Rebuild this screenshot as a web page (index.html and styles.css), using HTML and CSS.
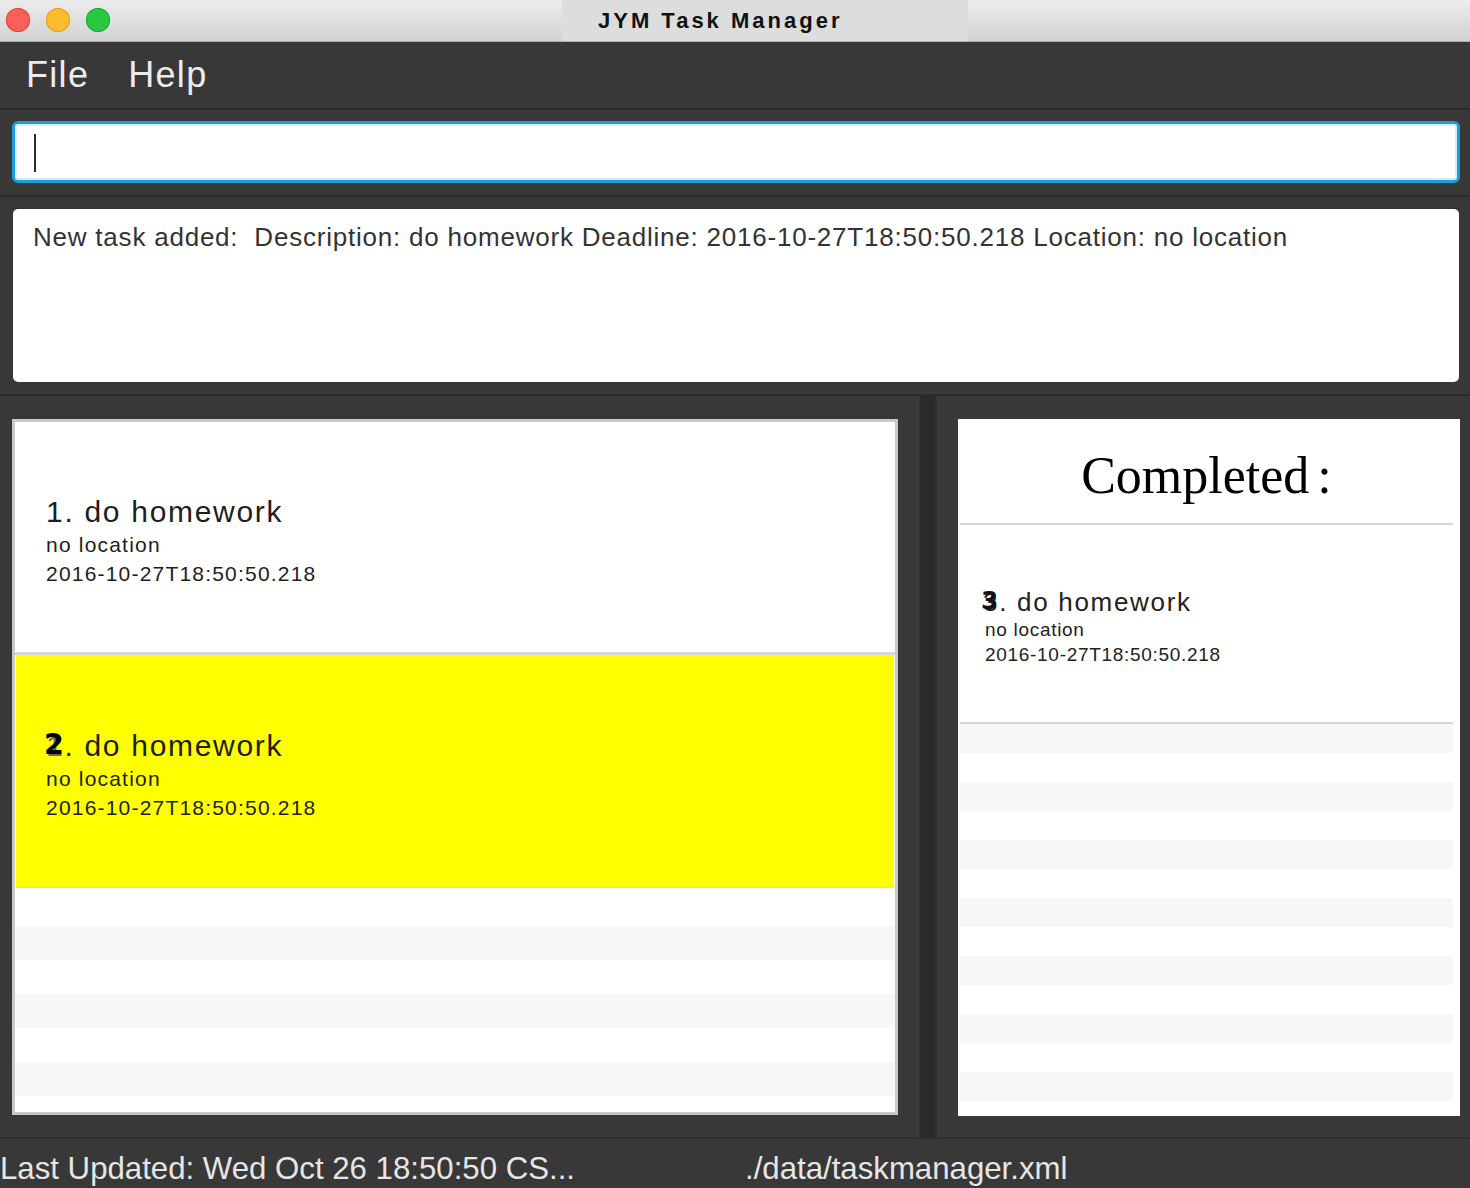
FILE: index.html
```html
<!DOCTYPE html>
<html>
<head>
<meta charset="utf-8">
<title>JYM Task Manager</title>
<link rel="stylesheet" href="styles.css">
</head>
<body>
<div class="window">
  <header class="titlebar">
    <div class="lights">
      <span class="light red"></span>
      <span class="light yellow"></span>
      <span class="light green"></span>
    </div>
    <div class="title-box"><span class="title">JYM Task Manager</span></div>
  </header>

  <nav class="menubar">
    <span class="menu-item">File</span>
    <span class="menu-item">Help</span>
  </nav>

  <section class="command-area">
    <div class="command-input"><span class="caret"></span></div>
  </section>

  <section class="result-area">
    <div class="result-box">New task added:&nbsp; Description: do homework Deadline: 2016-10-27T18:50:50.218 Location: no location</div>
  </section>

  <main class="main">
    <div class="left-col">
      <div class="task-panel">
        <div class="task-card">
          <div class="task-title"><span class="num">1</span>. do homework</div>
          <div class="task-sub">no location</div>
          <div class="task-sub">2016-10-27T18:50:50.218</div>
        </div>
        <div class="task-card selected">
          <div class="task-title"><span class="num">1<span class="num-over">2</span></span>. do homework</div>
          <div class="task-sub">no location</div>
          <div class="task-sub">2016-10-27T18:50:50.218</div>
        </div>
        <div class="rows">
          <div class="row first"></div>
          <div class="row alt"></div>
          <div class="row"></div>
          <div class="row alt"></div>
          <div class="row"></div>
          <div class="row alt"></div>
          <div class="row"></div>
        </div>
      </div>
    </div>

    <div class="divider"></div>

    <div class="right-col">
      <div class="done-panel">
        <div class="done-header">Completed<span class="colon">:</span></div>
        <div class="done-card">
          <div class="done-title"><span class="num">3<span class="num-over small">3</span></span>. do homework</div>
          <div class="done-sub">no location</div>
          <div class="done-sub">2016-10-27T18:50:50.218</div>
        </div>
        <div class="done-rows">
          <div class="drow alt"></div>
          <div class="drow"></div>
          <div class="drow alt"></div>
          <div class="drow"></div>
          <div class="drow alt"></div>
          <div class="drow"></div>
          <div class="drow alt"></div>
          <div class="drow"></div>
          <div class="drow alt"></div>
          <div class="drow"></div>
          <div class="drow alt"></div>
          <div class="drow"></div>
          <div class="drow alt"></div>
        </div>
      </div>
    </div>
  </main>

  <footer class="statusbar">
    <span class="status-left">Last Updated: Wed Oct 26 18:50:50 CS...</span>
    <span class="status-right">./data/taskmanager.xml</span>
  </footer>
</div>
</body>
</html>
```

FILE: styles.css
```css
* { box-sizing: border-box; }

html, body {
  margin: 0;
  padding: 0;
  background: #383838;
}

body {
  width: 1470px;
  height: 1188px;
  overflow: hidden;
  font-family: "Liberation Sans", Arial, sans-serif;
}

.window {
  display: flex;
  flex-direction: column;
  width: 1470px;
  height: 1188px;
}

/* title bar */
.titlebar {
  height: 42px;
  flex: none;
  display: flex;
  align-items: stretch;
  background: linear-gradient(#ececec, #d2d2d2);
  border-bottom: 1px solid #b1b1b1;
}

.lights {
  display: flex;
  align-items: center;
  gap: 16px;
  padding-left: 6px;
  padding-bottom: 1px;
}

.light {
  width: 24px;
  height: 24px;
  border-radius: 50%;
  display: block;
}
.light.red { background: #fc5f57; box-shadow: inset 0 0 0 1px #e0443e; }
.light.yellow { background: #fdbc2e; box-shadow: inset 0 0 0 1px #dea123; }
.light.green { background: #28c840; box-shadow: inset 0 0 0 1px #1aab29; }

.title-box {
  margin-left: 452px;
  width: 406px;
  background: #dddddd;
  display: flex;
  align-items: center;
  padding-left: 36px;
}

.title {
  font-weight: bold;
  font-size: 22px;
  letter-spacing: 3px;
  color: #111;
}

/* menu */
.menubar {
  height: 66px;
  flex: none;
  display: flex;
  gap: 39px;
  padding-left: 26px;
  line-height: 66px;
  font-size: 36px;
  color: #ececec;
}

.menu-item { letter-spacing: 1.3px; }

/* command */
.command-area {
  flex: none;
  height: 87px;
  border-top: 2px solid #2c2c2c;
  padding: 11px 10px 0 12px;
}

.command-input {
  height: 62px;
  background: #fff;
  border: 3px solid #1b9fdc;
  border-radius: 6px;
  box-shadow: inset 0 0 0 2px #d6eef9;
  padding: 10px 0 0 19px;
}

.caret {
  display: block;
  width: 2px;
  height: 38px;
  background: #2a2a2a;
}

/* result */
.result-area {
  flex: none;
  height: 199px;
  border-top: 2px solid #2c2c2c;
  padding: 12px 11px 12px 13px;
}

.result-box {
  height: 173px;
  background: #fff;
  border-radius: 5px;
  box-shadow: 0 0 1px #222;
  padding: 13px 20px;
  font-size: 26px;
  line-height: 30px;
  letter-spacing: 0.78px;
  color: #333;
  white-space: nowrap;
}

/* main */
.main {
  flex: none;
  height: 743px;
  border-top: 2px solid #2c2c2c;
  display: grid;
  grid-template-columns: 919px 18px 1fr;
}

.left-col {
  padding: 23px 21px 22px 12px;
}

.task-panel {
  height: 100%;
  background: #fff;
  border: 3px solid #c8c8c8;
  display: flex;
  flex-direction: column;
}

.task-card {
  height: 233px;
  flex: none;
  background: #fff;
  border-bottom: 3px solid #d9d9d9;
  padding: 72px 0 0 31px;
  color: #1e1e1e;
}

.task-card.selected {
  background: #ffff00;
  border-bottom: 1px solid #dcdcc0;
  height: 233px;
  padding-top: 73px;
  margin: 0 1px 0 1px;
  padding-left: 30px;
}

.task-title {
  font-size: 30px;
  line-height: 36px;
  letter-spacing: 1.7px;
}

.task-sub {
  font-size: 21px;
  line-height: 29px;
  letter-spacing: 1.2px;
}

.num {
  position: relative;
}

.num-over {
  position: absolute;
  left: -2px;
  top: -2px;
  font-weight: bold;
  color: #000;
  font-family: "DejaVu Sans", sans-serif;
  font-size: 0.95em;
}

.num-over.small {
  left: -2px;
  top: -1px;
  color: #111;
}

.selected .num { color: #666; }

.rows {
  flex: 1;
  display: flex;
  flex-direction: column;
}

.row {
  height: 34px;
  flex: none;
  background: #fff;
}
.row.first { height: 38px; }
.row.alt { background: #f7f7f7; }
.row:last-child { flex: 1; }

.divider {
  background: #2a2a2a;
  border-left: 1px solid #333;
  border-right: 2px solid #323232;
}

.right-col {
  padding: 23px 10px 21px 21px;
}

.done-panel {
  height: 100%;
  background: #fff;
  padding: 0 7px 0 2px;
  display: flex;
  flex-direction: column;
}

.done-header {
  flex: none;
  height: 106px;
  border-bottom: 2px solid #d6d6d6;
  padding-top: 10px;
  text-align: center;
  font-family: "Liberation Serif", "Times New Roman", serif;
  font-size: 52px;
  line-height: 94px;
  color: #000;
}

.colon { margin-left: 8px; }

.done-card {
  flex: none;
  height: 199px;
  border-bottom: 2px solid #d6d6d6;
  padding: 62px 0 0 23px;
  color: #222;
}

.done-title {
  font-size: 26px;
  line-height: 30px;
  letter-spacing: 1.7px;
}

.done-sub {
  font-size: 19px;
  line-height: 25px;
  letter-spacing: 0.7px;
  padding-left: 2px;
}

.done-rows {
  flex: 1;
  display: flex;
  flex-direction: column;
  overflow: hidden;
}

.drow {
  height: 29px;
  flex: none;
  background: #fff;
}
.drow.alt { background: #f7f7f7; }

/* status */
.statusbar {
  flex: none;
  height: 51px;
  border-top: 2px solid #2f2f2f;
  display: grid;
  grid-template-columns: 745px 1fr;
  padding-top: 11px;
  font-size: 31.2px;
  line-height: 38px;
  color: #e6e6e6;
  white-space: nowrap;
  overflow: hidden;
}
```
